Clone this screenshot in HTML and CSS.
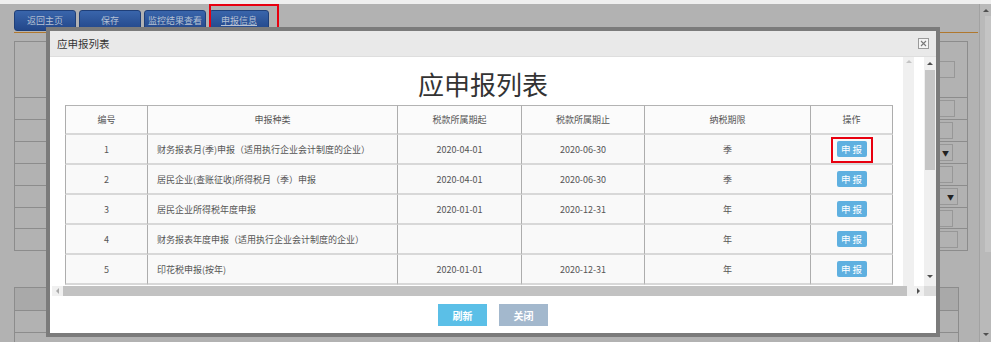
FILE: index.html
```html
<!DOCTYPE html>
<html lang="zh-CN">
<head>
    <meta charset="UTF-8">
    <meta name="viewport" content="width=device-width, initial-scale=1.0">
    <title>应申报列表</title>
    <link rel="stylesheet" href="styles.css">
</head>
<body>
    <div class="topline"></div>
    <div class="screen">
        <div class="page">
            <div class="toolbar">
                <a class="tbtn">返回主页</a>
                <a class="tbtn">保存</a>
                <a class="tbtn">监控结果查看</a>
                <a class="tbtn current">申报信息<span class="mark mark-tab"></span></a>
            </div>
            <div class="rule"></div>
            <div class="group g1">
                <div class="frow tall"><span class="fin in1"></span></div>
                <div class="frow"><span class="fin in1"></span></div>
                <div class="frow"><span class="fin in2"></span></div>
                <div class="frow"><span class="fin sel in2">&#9660;</span></div>
                <div class="frow"><span class="fin in2"></span></div>
                <div class="frow"><span class="fin sel in3">&#9660;</span></div>
                <div class="frow short"><span class="fin in2"></span></div>
                <div class="frow"><span class="fin in3"></span></div>
            </div>
            <div class="group g2">
                <div class="frow head"></div>
                <div class="frow"></div>
                <div class="frow"></div>
            </div>
        </div>
        <div class="pagebar">
            <span class="arr up dark"></span>
            <div class="pthumb"></div>
            <span class="arr down dark"></span>
        </div>
    </div>

    <div class="modal">
        <div class="mhead">
            <span>应申报列表</span>
            <svg class="xbox" width="11" height="11" viewBox="0 0 11 11">
                <rect x="0.5" y="0.5" width="10" height="10" fill="#f4f4f4" stroke="#9a9a9a"/>
                <path d="M3 3 L8 8 M8 3 L3 8" stroke="#7a7a7a" stroke-width="1.1"/>
            </svg>
        </div>
        <div class="mbody">
            <div class="viewport">
                <div class="big">应申报列表</div>
                <table class="list">
                    <colgroup>
                        <col style="width:83px"><col style="width:250px"><col style="width:124px">
                        <col style="width:123px"><col style="width:166px"><col style="width:82px">
                    </colgroup>
                    <tr>
                        <th>编号</th><th>申报种类</th><th>税款所属期起</th><th>税款所属期止</th><th>纳税期限</th><th>操作</th>
                    </tr>
                    <tr>
                        <td>1</td><td class="name">财务报表月(季)申报（适用执行企业会计制度的企业）</td>
                        <td>2020-04-01</td><td>2020-06-30</td><td>季</td>
                        <td><span class="sb">申报<span class="mark mark-row"></span></span></td>
                    </tr>
                    <tr>
                        <td>2</td><td class="name">居民企业(查账征收)所得税月（季）申报</td>
                        <td>2020-04-01</td><td>2020-06-30</td><td>季</td>
                        <td><span class="sb">申报</span></td>
                    </tr>
                    <tr>
                        <td>3</td><td class="name">居民企业所得税年度申报</td>
                        <td>2020-01-01</td><td>2020-12-31</td><td>年</td>
                        <td><span class="sb">申报</span></td>
                    </tr>
                    <tr>
                        <td>4</td><td class="name">财务报表年度申报（适用执行企业会计制度的企业）</td>
                        <td></td><td></td><td>年</td>
                        <td><span class="sb">申报</span></td>
                    </tr>
                    <tr>
                        <td>5</td><td class="name">印花税申报(按年)</td>
                        <td>2020-01-01</td><td>2020-12-31</td><td>年</td>
                        <td><span class="sb">申报</span></td>
                    </tr>
                </table>
            </div>
            <div class="innerbar"><span class="arr up faint"></span></div>
            <div class="gap"></div>
            <div class="vbar">
                <span class="arr up dark"></span>
                <div class="vthumb"></div>
                <span class="arr down dark"></span>
            </div>
            <div class="hbar">
                <span class="harr"><span class="arr left faint"></span></span>
                <div class="hthumb"></div>
                <span class="harr"><span class="arr right dark"></span></span>
            </div>
            <div class="corner"></div>
        </div>
        <div class="mfoot">
            <a class="fbtn refresh">刷新</a>
            <a class="fbtn close">关闭</a>
        </div>
    </div>
</body>
</html>
```

FILE: styles.css
```css
body {
    margin: 0;
    height: 342px;
    overflow: hidden;
    background: #b2b2b2;
    font-family: "Noto Sans CJK SC", "Microsoft YaHei", sans-serif;
}
a {
    cursor: pointer;
}
.topline {
    height: 4px;
    background: #efefef;
}
.screen {
    display: flex;
    height: 338px;
}
.page {
    flex: 1;
    padding: 6px 1px 0 14px;
}

/* toolbar */
.toolbar {
    display: flex;
    gap: 3px;
    height: 21px;
}
.tbtn {
    position: relative;
    width: 62px;
    height: 21px;
    box-sizing: border-box;
    border: 1px solid #1f3f78;
    border-radius: 3px;
    background: linear-gradient(#3965ab, #23478a);
    color: #b7c2d4;
    font-size: 9px;
    display: flex;
    align-items: center;
    justify-content: center;
}
.tbtn.current {
    width: 60px;
    text-decoration: underline;
}
.mark {
    position: absolute;
    box-sizing: border-box;
    border: 2px solid #e8000f;
}
.mark-tab {
    left: -1px;
    top: -7px;
    width: 70px;
    height: 32px;
}
.rule {
    height: 1px;
    margin-top: 1px;
    background: #b0782e;
}

/* dimmed form behind the dialog */
.group {
    box-sizing: border-box;
    border: 1px solid #8c8c8c;
    border-bottom: none;
}
.g1 {
    width: 954px;
    margin-top: 8px;
}
.g2 {
    width: 945px;
    margin-top: 36px;
}
.frow {
    height: 21px;
    border-bottom: 1px solid #8c8c8c;
    display: flex;
    align-items: center;
    justify-content: flex-end;
}
.frow.tall {
    height: 55px;
}
.frow.short {
    height: 20px;
}
.frow.head {
    height: 22px;
    background: #a9a9a9;
}
.fin {
    box-sizing: border-box;
    height: 17px;
    border: 1px solid #979797;
    font-size: 7px;
    color: #222;
    display: flex;
    align-items: center;
    justify-content: flex-end;
    padding-right: 3px;
}
.in1 {
    width: 20px;
    margin-right: 12px;
}
.in2 {
    width: 17px;
    margin-right: 14px;
}
.in3 {
    width: 22px;
    margin-right: 9px;
}

/* page scrollbar */
.pagebar {
    width: 11px;
    background: #b9b9b9;
    border-left: 1px solid #a2a2a2;
    display: flex;
    flex-direction: column;
    align-items: center;
    padding: 5px 0 6px;
}
.pthumb {
    width: 6px;
    height: 236px;
    margin: 4px 0 0 5px;
    background: #c4c4c4;
}
.pagebar .down {
    margin-top: auto;
}

/* arrows */
.arr {
    display: block;
    width: 0;
    height: 0;
    border: 3px solid transparent;
}
.arr.up {
    border-top: none;
    border-bottom-color: #505050;
}
.arr.down {
    border-bottom: none;
    border-top-color: #505050;
}
.arr.left {
    border-left: none;
    border-right-color: #aaa;
}
.arr.right {
    border-right: none;
    border-left-color: #505050;
}
.arr.up.faint {
    border-bottom-color: #c4c4c4;
}

/* dialog */
.modal {
    position: absolute;
    left: 46px;
    top: 27px;
    width: 886px;
    height: 302px;
    border: 4px solid #7b7b7b;
    background: #fff;
    display: flex;
    flex-direction: column;
}
.mhead {
    height: 25px;
    flex-shrink: 0;
    background: #e9e9e9;
    border-bottom: 1px solid #dedede;
    padding: 0 7px;
    display: flex;
    align-items: center;
    justify-content: space-between;
    font-size: 10.5px;
    color: #333;
}
.mbody {
    height: 240px;
    flex-shrink: 0;
    padding-left: 2px;
    display: grid;
    grid-template-columns: 851px 11px 10px 12px;
    grid-template-rows: 229px 11px;
}
.viewport {
    overflow: hidden;
    padding: 9px 0 0 13px;
}
.big {
    width: 828px;
    padding-left: 8px;
    box-sizing: border-box;
    text-align: center;
    font-size: 26px;
    line-height: 36px;
    color: #333;
    margin-bottom: 3px;
}
.list {
    width: 828px;
    table-layout: fixed;
    border-collapse: separate;
    border-spacing: 0;
    font-size: 9px;
    color: #555;
    background: #f9f9f9;
}
.list th,
.list td {
    height: 28px;
    padding: 0;
    text-align: center;
    font-weight: normal;
    border-right: 1px solid #adadad;
    border-bottom: 2px solid #d8d8d8;
    white-space: nowrap;
}
.list th {
    height: 27px;
    border-top: 1px solid #b3b3b3;
    background: #fbfbfb;
}
.list th:first-child,
.list td:first-child {
    border-left: 1px solid #adadad;
}
.list td.name {
    text-align: left;
    padding-left: 9px;
}
.sb {
    position: relative;
    display: inline-block;
    width: 30px;
    height: 16px;
    line-height: 16px;
    padding-left: 2px;
    box-sizing: border-box;
    letter-spacing: 2px;
    background: #5fb0e0;
    border-radius: 2px;
    color: #fff;
    font-size: 9.5px;
    vertical-align: middle;
}
.mark-row {
    left: -6px;
    top: -4px;
    width: 42px;
    height: 26px;
}

.innerbar {
    background: #f0f0f0;
    display: flex;
    justify-content: center;
    padding-top: 3px;
}
.vbar {
    background: #f0f0f0;
    display: flex;
    flex-direction: column;
    align-items: center;
    padding: 5px 0 8px;
}
.vthumb {
    width: 10px;
    height: 100px;
    margin-top: 5px;
    background: #c6c6c6;
}
.vbar .down {
    margin-top: auto;
}
.hbar {
    grid-column: 1 / 4;
    height: 10px;
    background: #f0f0f0;
    display: flex;
    align-items: center;
}
.harr {
    width: 11px;
    display: flex;
    justify-content: center;
}
.hthumb {
    width: 844px;
    height: 10px;
    background: #c2c2c2;
    margin-right: 6px;
}
.corner {
    height: 10px;
    background: #dcdcdc;
}
.mfoot {
    flex: 1;
    display: flex;
    justify-content: center;
    gap: 12px;
    padding-top: 7px;
}
.fbtn {
    width: 49px;
    height: 22px;
    display: flex;
    align-items: center;
    justify-content: center;
    color: #fff;
    font-size: 10px;
    font-weight: bold;
}
.fbtn.refresh {
    background: #5bbfe7;
}
.fbtn.close {
    background: #a3b8cd;
}
```
